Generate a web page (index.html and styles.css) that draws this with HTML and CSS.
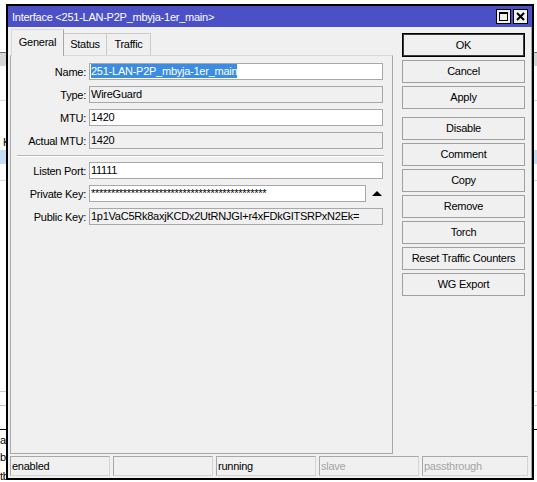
FILE: index.html
```html
<!DOCTYPE html>
<html lang="en">
<head>
    <meta charset="UTF-8">
    <title>Interface</title>
    <link rel="stylesheet" href="styles.css">
</head>
<body>
    <!-- windows behind the dialog -->
    <div class="desk">
        <div class="desk-head"></div>
        <div class="desk-row"></div>
        <div class="desk-text">Key</div>
        <div class="desk-sel"></div>
        <div class="desk-row2"></div>
        <div class="desk-gap"></div>
        <div class="desk-gap2"></div>
        <div class="desk-gap3"></div>
        <div class="desk-list">
            <p>aeth</p>
            <p>bri</p>
            <p class="low">tbr</p>
        </div>
    </div>

    <div class="win">
        <div class="title">
            <span class="title-text">Interface &lt;251-LAN-P2P_mbyja-1er_main&gt;</span>
            <span class="tbtn">
                <svg width="9" height="9" viewBox="0 0 9 9"><rect x="0.5" y="0.5" width="8" height="8" fill="none" stroke="#000"/><line x1="0" y1="1.5" x2="9" y2="1.5" stroke="#000"/></svg>
            </span>
            <span class="tbtn">
                <svg width="9" height="9" viewBox="0 0 9 9"><path d="M1 1L8 8M8 1L1 8" stroke="#000" stroke-width="2"/></svg>
            </span>
        </div>
        <div class="body">
            <div class="main">
                <div class="left">
                    <div class="tabs">
                        <div class="tab on">General</div>
                        <div class="tab t-status">Status</div>
                        <div class="tab t-traffic">Traffic</div>
                    </div>
                    <div class="panel">
                        <div class="row">
                            <span class="lbl">Name:</span>
                            <span class="fld"><span class="sel">251-LAN-P2P_mbyja-1er_main</span></span>
                        </div>
                        <div class="row">
                            <span class="lbl">Type:</span>
                            <span class="fld ro">WireGuard</span>
                        </div>
                        <div class="row">
                            <span class="lbl">MTU:</span>
                            <span class="fld">1420</span>
                        </div>
                        <div class="row">
                            <span class="lbl">Actual MTU:</span>
                            <span class="fld ro">1420</span>
                        </div>
                        <div class="sep"></div>
                        <div class="row">
                            <span class="lbl">Listen Port:</span>
                            <span class="fld">11111</span>
                        </div>
                        <div class="row">
                            <span class="lbl">Private Key:</span>
                            <span class="fld key stars">********************************************</span>
                            <span class="tri"></span>
                        </div>
                        <div class="row">
                            <span class="lbl">Public Key:</span>
                            <span class="fld ro">1p1VaC5Rk8axjKCDx2UtRNJGI+r4xFDkGITSRPxN2Ek=</span>
                        </div>
                    </div>
                </div>
                <div class="btns">
                    <div class="btn ok">OK</div>
                    <div class="btn">Cancel</div>
                    <div class="btn">Apply</div>
                    <div class="btn gap">Disable</div>
                    <div class="btn">Comment</div>
                    <div class="btn">Copy</div>
                    <div class="btn">Remove</div>
                    <div class="btn">Torch</div>
                    <div class="btn">Reset Traffic Counters</div>
                    <div class="btn">WG Export</div>
                </div>
            </div>
            <div class="status">
                <div class="seg">enabled</div>
                <div class="seg"></div>
                <div class="seg">running</div>
                <div class="seg dim">slave</div>
                <div class="seg dim last">passthrough</div>
            </div>
        </div>
    </div>
</body>
</html>
```

FILE: styles.css
```css
*{
    padding:0;
    margin:0;
    box-sizing:border-box;
}
html,body{
    width:100%;
    height:100%;
    overflow:hidden;
    background:#fff;
    color:#000;
    font-family:"Liberation Sans", Arial, sans-serif;
    font-size:11px;
    letter-spacing:-0.25px;
}

/* background windows */
.desk{
    padding-top:52px;
}
.desk-head{
    height:14px;
    border-top:1px solid #6e6e6e;
    background:#d6d6d6;
}
.desk-row{
    height:35px;
    border-bottom:1px solid #d8d8d8;
}
.desk-text{
    height:49px;
    padding:35px 0 0 3px;
    line-height:13px;
}
.desk-sel{
    height:14px;
    background:#c4dcf4;
}
.desk-row2{
    height:17px;
    border-bottom:1px solid #d8d8d8;
}
.desk-gap{
    height:211px;
    border-bottom:1px solid #c8c8c8;
}
.desk-gap2{
    height:14px;
    border-bottom:1px solid #c8c8c8;
}
.desk-gap3{
    height:24px;
    border-bottom:1px solid #000;
}
.desk-list p{
    height:13px;
    line-height:13px;
    padding-top:4px;
    box-sizing:content-box;
    white-space:nowrap;
}
.desk-list p.low{
    padding-top:6px;
}

/* dialog */
.win{
    position:absolute;
    left:6px;
    top:4px;
    width:528px;
    height:476px;
    border:2px solid #000;
    background:#f0f0f0;
    display:flex;
    flex-direction:column;
}
.title{
    height:21px;
    background:#4b50c7;
    color:#fff;
    display:flex;
    align-items:center;
    padding:0 4px;
}
.title-text{
    flex:1;
    white-space:nowrap;
}
.tbtn{
    width:15px;
    height:15px;
    margin-left:2px;
    border:1px solid #000;
    background:#f0f0f0;
    display:flex;
    align-items:center;
    justify-content:center;
}
.body{
    flex:1;
    display:flex;
    flex-direction:column;
    padding:0 2px 2px;
    border-right:1px solid #a8a8a8;
}
.main{
    flex:1;
    display:flex;
}
.left{
    width:383px;
    display:flex;
    flex-direction:column;
}
.tabs{
    height:28px;
    padding:2px 0 0 1px;
    display:flex;
    align-items:flex-end;
}
.tab{
    height:22px;
    border:1px solid #cacaca;
    border-bottom:none;
    border-left:none;
    text-align:center;
    line-height:21px;
}
.tab.on{
    position:relative;
    z-index:1;
    width:53px;
    height:27px;
    margin-bottom:-1px;
    border-left:1px solid #d8d8d8;
    border-top-color:#d8d8d8;
    border-right-color:#a8a8a8;
    background:#f0f0f0;
    line-height:24px;
}
.t-status{
    width:43px;
}
.t-traffic{
    width:44px;
}
.panel{
    flex:1;
    border:1px solid #a8a8a8;
    border-top-color:#d8d8d8;
    padding-top:7px;
}
.row{
    display:flex;
    align-items:center;
    height:17px;
    margin-bottom:6px;
}
.lbl{
    width:75px;
    text-align:right;
    white-space:nowrap;
}
.fld{
    margin-left:3px;
    width:294px;
    height:17px;
    border:1px solid #a8a8a8;
    background:#fff;
    padding-left:1px;
    line-height:15px;
    white-space:nowrap;
    overflow:hidden;
}
.fld.ro{
    background:#f0f0f0;
}
.fld.key{
    width:277px;
}
.stars{
    letter-spacing:-0.3px;
}
.sel{
    background:#3b8de4;
    color:#fff;
    padding:1px 0;
}
.sep{
    height:2px;
    margin:1px 8px 5px 6px;
    border-top:1px solid #b8b8b8;
    border-bottom:1px solid #fff;
}
.tri{
    width:0;
    height:0;
    margin-left:6px;
    border-left:5px solid transparent;
    border-right:5px solid transparent;
    border-bottom:5px solid #000;
}
.btns{
    width:123px;
    margin-left:9px;
    padding-top:6px;
    display:flex;
    flex-direction:column;
}
.btn{
    height:23px;
    margin-bottom:3px;
    border:1px solid #a0a0a0;
    text-align:center;
    line-height:21px;
    white-space:nowrap;
}
.btn.ok{
    height:24px;
    border-color:#000;
    box-shadow:inset 0 0 0 1px #3c3c3c;
    line-height:22px;
}
.btn.gap{
    margin-top:5px;
}
.status{
    height:20px;
    margin-top:2px;
    padding-right:1px;
    display:flex;
    gap:3px;
}
.seg{
    width:100px;
    border:1px solid;
    border-color:#a8a8a8 #d4d4d4 #d4d4d4 #a8a8a8;
    padding-left:1px;
    line-height:18px;
    white-space:nowrap;
}
.seg.dim{
    color:#a4a4a4;
}
.seg.last{
    flex:1;
}
```
